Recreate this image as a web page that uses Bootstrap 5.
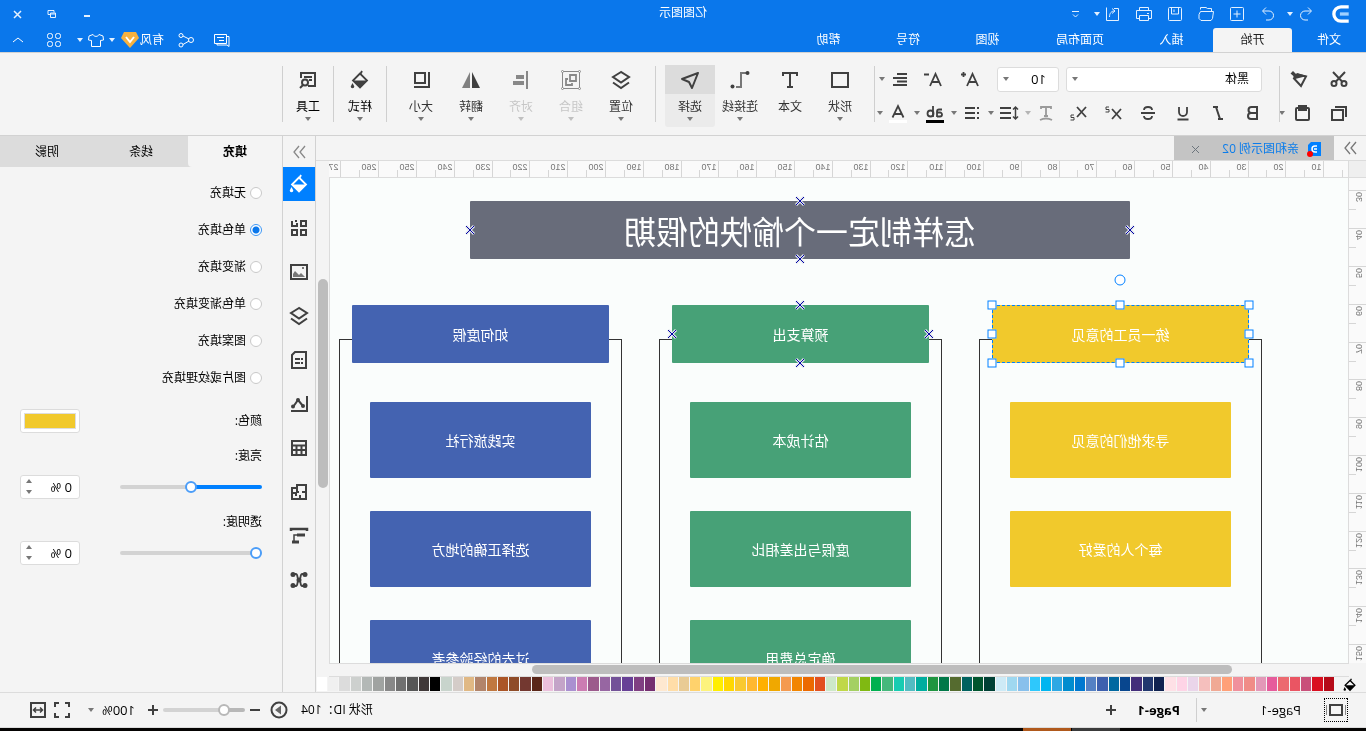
<!DOCTYPE html>
<html lang="zh-CN">
<head>
<meta charset="utf-8">
<meta name="viewport" content="width=device-width, initial-scale=1">
<title>亿图图示</title>
<link href="https://cdn.jsdelivr.net/npm/bootstrap@5.3.0/dist/css/bootstrap.min.css" rel="stylesheet">
<style>
:root{--brand:#0a77eb;--chrome:#f4f4f4;--line:#dcdcdc;--ink:#404040;--accent:#0080ff}
body{font-family:"Open Sans","Noto Sans CJK SC",sans-serif;font-size:12px;line-height:16px;color:#000;background:var(--chrome);overflow:hidden}
/* the whole window is shown flipped left to right */
.mirror{transform:scaleX(-1);height:100vh}
button{border:0;background:none;padding:0;color:inherit;font:inherit;line-height:16px}
svg{display:block;flex:none}
.ico{width:20px;height:20px;fill:none;stroke:currentColor;stroke-width:2}
.thin .ico{stroke-width:1}
.tri{width:6px;height:4px;fill:#777}
.ibtn{display:flex;align-items:center;justify-content:center;flex:none}
.titlebar{height:28px;flex:none;background:var(--brand);color:#e4f1ff}
.titlebar .ibtn{width:31px;height:26px}
.titlebar .drop{width:13px;margin-left:-6px}
.titlebar .tri,.menubar .tri{fill:#e4f1ff}
.titlebar .logo{width:34px;margin:0 2px 0 8px}
.titlebar .win{width:35px}
.app-title{left:0;right:0;top:5px;pointer-events:none;color:#fff}
.menubar{height:24px;flex:none;background:var(--brand);color:#fff}
.menubar .tab{height:24px}
.menubar .tab.on{background:var(--chrome);color:#222;width:79px;border-radius:3px 3px 0 0;margin-right:12px}
.menubar .file{width:74px}
.menubar .w1{width:59px}.menubar .w2{width:124px}.menubar .w3{width:61px}.menubar .w4{width:98px}
.menubar .ibtn{height:24px;width:36px}
.menubar .slim{width:16px}
.ribbon{height:84px;flex:none;border-top:1px solid #d2d2d2;border-bottom:1px solid #d2d2d2;color:var(--ink);padding-top:13px}
.rgroup{height:56px}
.rule{width:1px;height:56px;background:#cfcfcf;flex:none}
.gap-l{margin-left:9px}
.gap-r{margin-right:9px}
.ribbon .row-t{height:26px}
.ribbon .row-b{height:26px;margin-top:8px}
.clip{width:86px;padding-left:9px}
.clip .ibtn{width:36px;height:26px}
.fmt{width:404px;padding-left:8px}
.fmt .ibtn{width:35px;height:26px}
.fmt .wide{width:37px}
.fmt .unit .ibtn{width:29px}
.fmt .unit .tri{width:8px}
.faded{opacity:.5}
.pick{position:relative;height:25px}
.pick select{appearance:none;width:100%;height:25px;border:1px solid var(--line);border-radius:3px;background:#fff;color:#000;padding:0 12px;font-size:12px}
.pick .tri{position:absolute;right:6px;top:10px}
.pick.face{width:196px;margin-left:9px}
.pick.size{width:62px;margin:0 8px 0 7px}
.pick.size select{font-size:13px}
.tool{width:50px;height:62px;border-radius:3px;display:flex;flex-direction:column;align-items:center;color:#333;margin-top:-1px}
.tool.wider{width:52px}
.tool .pic{height:29px;width:100%;display:flex;align-items:center;justify-content:center;color:var(--ink)}
.tool .cap{margin-top:5px}
.tool .tri{margin-top:2px}
.tool.on{background:#ebebeb}.tool.on .pic{background:#dcdcdc}
.tool:disabled{color:#c6c6c6}.tool:disabled .pic{color:#888}.tool:disabled .tri{fill:#c0c0c0}
.flow-box{min-width:0;min-height:0}
.docbar{height:25px;flex:none;border-bottom:1px solid var(--line)}
.docbar .fold{width:32px;height:24px;color:#777}
.doctab{width:160px;height:24px;background:#c4c4c4;color:#0a7ceb;padding:2px 17px 0 12px}
.doctab .ico{width:15px;height:16px}
.ruler text{font:9px "Liberation Sans",sans-serif;fill:#777}
.ruler path{stroke:#d6d6d6;fill:none}
.ruler.h{height:17px;background:#fafafa}
.ruler.v{width:18px;background:#fafafa;border-right:1px solid var(--line)}
.rulerrow{height:17px;flex:none;border-bottom:1px solid var(--line)}
.corner{width:18px;background:#efefef;border-right:1px solid var(--line)}
.canvas{background:#fafdfc;overflow:hidden;border-right:1px solid var(--line)}
.node{display:flex;align-items:center;justify-content:center;color:#fff;font-size:14px;border-radius:1px;position:relative;font-family:"Noto Sans CJK SC",sans-serif}
.headline{width:660px;height:58px;margin:23px 0 46px 218px;background:#686c7a;font-size:32px}
.lanes{margin-left:86px;gap:37px}
.lane{width:283px;position:relative;height:480px;flex:none}
.lane::before{content:"";position:absolute;inset:34px 0 0 0;border:1px solid #333}
.lane .head{width:257px;height:58px;margin:0 auto 39px}
.lane .item{width:221px;height:76px;margin:0 auto 33px}
.ye .node{background:#f1c92c}.gr .node{background:#47a177}.bl .node{background:#4463b1}
.picked{outline:1px dashed var(--accent);outline-offset:-1px}
.grip{position:absolute;width:9px;height:9px;background:#fff;border:1px solid var(--accent);transform:translate(-50%,-50%)}
.turn{width:11px;height:11px;border-radius:50%}
.joint{position:absolute;width:11px;height:11px;transform:translate(-50%,-50%)}
.l0{left:0}.l5{left:50%}.l9{left:100%}.t0{top:0}.t5{top:50%}.t9{top:100%}.tt{top:-25px}
.vbar{width:13px;flex:none;background:var(--chrome)}
.vbar i{display:block;width:10px;height:209px;margin:118px 0 0 1px;background:#bdbdbd;border-radius:5px}
.hbar{height:14px;flex:none;border:1px solid var(--line);border-width:1px 0;margin-left:17px}
.hbar i{display:block;width:700px;height:9px;margin:1px 0 0 117px;background:#bdbdbd;border-radius:5px}
.palette{height:15px;flex:none}
.palette .bucket{width:32px;height:15px}
.palette .bucket .ico{width:14px;height:14px}
.palette .chip{flex:1 1 0;height:14px;margin-right:1px}
.dock{width:34px;border-left:1px solid #d2d2d2;border-right:1px solid #d2d2d2;color:var(--ink)}
.dock .ibtn{width:100%;height:34px;margin-bottom:10px}
.dock .fold{height:31px;margin:0;color:#888}
.dock .on{background:var(--accent);color:#fff}
.panel{width:282px}
.ptabs{height:31px;background:#dcdcdc}
.ptabs button{flex:1}
.ptabs .on{background:var(--chrome);border-radius:0 0 4px 0}
.panel .form-check{min-height:0;height:37px;margin:0;padding:0;display:flex;align-items:center;gap:4px}
.panel .form-check-input{float:none;margin:0;width:12px;height:12px;border:1px solid #c8c8c8;box-shadow:none}
.panel .form-check-input:checked{background:radial-gradient(circle,#0a77eb 0 3px,#fff 4px);border-color:#3d97f5}
.opts{padding:7px 20px 7px}
.field{padding:0 20px;height:35px;display:flex;align-items:center;justify-content:space-between}
.fieldslot{height:27px;margin-bottom:4px}
.swatch{width:60px;height:24px;border:1px solid var(--line);border-radius:3px;background:#fff;padding:3px}
.swatch span{display:block;height:16px;background:#f1c92c;border:1px solid #ddd}
.spin{position:relative;width:60px;height:24px}
.spin input{width:60px;height:24px;border:1px solid var(--line);border-radius:3px;background:#fff;padding:0 7px;font-size:13px}
.spin .arrows{position:absolute;right:6px;top:4px;display:flex;flex-direction:column;justify-content:space-between;height:15px}
.flip{transform:rotate(180deg)}
input[type=range]{appearance:none;width:142px;height:12px;background:none;margin:0}
input[type=range]::-webkit-slider-runnable-track{height:4px;border-radius:2px;background:linear-gradient(90deg,var(--fill,#0080ff) var(--at),#d3d3d3 var(--at))}
input[type=range]::-webkit-slider-thumb{appearance:none;width:12px;height:12px;margin-top:-4px;border-radius:50%;background:#fff;border:2px solid #4b9df8}
.zoomer input[type=range]{width:82px;--fill:#b8b8b8}
.zoomer input[type=range]::-webkit-slider-thumb{border-color:#b8b8b8}
.status{height:36px;flex:none;border-top:1px solid var(--line);border-bottom:1px solid var(--line);color:#000}
.status .pagebox{width:24px;height:24px;border:1px dotted #000;margin:0 23px 0 18px}
.status .ico{color:var(--ink)}
.status .rule{height:24px}
.latin{font-size:13px}
.pg{width:94px;text-align:left}
.taskbar{height:3px;flex:none;background:#050302;padding-left:246px}
.taskbar i{width:48px;height:3px;background:#3a3a3a;margin-right:1px}
.taskbar .hot{background:#b0591c}
</style>
</head>
<body>
<svg width="0" height="0" class="position-absolute" aria-hidden="true"><defs>
<symbol id="tri" viewBox="0 0 6 4"><path d="M0 0h6L3 4z"/></symbol>
<symbol id="fold" viewBox="0 0 20 20"><path d="M4 4l5 6-5 6M10 4l5 6-5 6" stroke-width="1.300"/></symbol>
<symbol id="bucket" viewBox="0 0 20 20"><path d="M8 1l2 4M10 3.500l7 7L10 17.500 3 10.500z" stroke-width="1.800"/><path d="M3 10.500h14l-7 7zM17.500 13l1.800 3.500a1.800 1.800 0 01-3.600 0z" fill="currentColor" stroke="none"/></symbol>
<symbol id="layers" viewBox="0 0 20 20"><path d="M10 2l8 5-8 5.500L2 7zM2 12.500l8 5.500 8-5.500"/></symbol>
<symbol id="joint" viewBox="0 0 11 11"><path d="M1.500 1.500l8 8M9.500 1.500l-8 8" stroke="#dfe4ea" stroke-width="3"/><path d="M1.500 1.500l8 8M9.500 1.500l-8 8" stroke="#0000a8"/></symbol>
</defs></svg>

<div class="mirror d-flex flex-column">
<header class="titlebar thin d-flex align-items-center position-relative">
  <span class="logo ibtn"><svg width="22" height="22" viewBox="0 0 20 20" fill="none"><path d="M3 3.500h7a6.500 6.500 0 010 13H3" stroke="#fff" stroke-width="3"/><path d="M3 10h8" stroke="#9fd0ff" stroke-width="3"/></svg></span>
  <button class="ibtn" aria-label="撤销"><svg class="ico" viewBox="0 0 20 20"><path d="M8 3.500L4.500 7 8 10.500M5 7h6a4.500 4.500 0 010 9H8"/></svg></button>
  <button class="ibtn drop" aria-label="撤销列表"><svg class="tri"><use href="#tri"/></svg></button>
  <button class="ibtn" aria-label="重做"><svg class="ico" viewBox="0 0 20 20"><path d="M12 3.500L15.500 7 12 10.500M15 7H9a4.500 4.500 0 000 9h3"/></svg></button>
  <button class="ibtn" aria-label="新建"><svg class="ico" viewBox="0 0 20 20"><rect x="3.500" y="3.500" width="13" height="13" rx="1"/><path d="M10 6.500v7M6.500 10h7"/></svg></button>
  <button class="ibtn" aria-label="打开"><svg class="ico" viewBox="0 0 20 20"><path d="M4.500 7.500v-3h4l1.500-1h5.500v2M2.500 7.500h13l1.500 3v4l-2 2H5l-1.500-2z"/></svg></button>
  <button class="ibtn" aria-label="保存"><svg class="ico" viewBox="0 0 20 20"><rect x="3.500" y="3.500" width="13" height="13" rx="1"/><path d="M6.500 4v6h7V4M11 5.500v2.500"/></svg></button>
  <button class="ibtn" aria-label="打印"><svg class="ico" viewBox="0 0 20 20"><path d="M5.500 6.500v-3h9v3M5 14.500H2.500v-8h15v8H15M5.500 11.500h9v5h-9zM5 9.500h2"/></svg></button>
  <button class="ibtn" aria-label="导出"><svg class="ico" viewBox="0 0 20 20"><path d="M9 4.500H4.500v12h12v-13M8 7l3-2.500M8 7l3 2.500M8.500 7c3 0 5 2 5 6"/></svg></button>
  <button class="ibtn drop" aria-label="导出列表"><svg class="tri"><use href="#tri"/></svg></button>
  <button class="ibtn" aria-label="更多"><svg width="9" height="9" viewBox="0 0 9 9" fill="none" stroke="currentColor"><path d="M1 1.500h7M2 4.500l2.500 2.500L7 4.500"/></svg></button>
  <div class="app-title position-absolute text-center">亿图图示</div>
  <div class="ms-auto d-flex">
    <button class="ibtn win" aria-label="最小化"><svg width="10" height="10" viewBox="0 0 10 10"><path d="M2 6h6v2H2z" fill="currentColor"/></svg></button>
    <button class="ibtn win" aria-label="还原"><svg width="10" height="10" viewBox="0 0 10 10" fill="none" stroke="currentColor"><path d="M3 3.500v-2h6v4H7M1.500 4h5v4.500h-5zM1.500 5h5"/></svg></button>
    <button class="ibtn win" aria-label="关闭"><svg width="9" height="9" viewBox="0 0 9 9" stroke="currentColor" stroke-width="1.500"><path d="M1 1l7 7M8 1L1 8"/></svg></button>
  </div>
</header>

<nav class="menubar thin d-flex align-items-center">
  <button class="tab file">文件</button><button class="tab on">开始</button><button class="tab w1">插入</button><button class="tab w2">页面布局</button><button class="tab w3">视图</button><button class="tab w4">符号</button><button class="tab w3">帮助</button>
  <div class="ms-auto d-flex align-items-center">
    <button class="ibtn" aria-label="消息"><svg class="ico" viewBox="0 0 20 20"><path d="M5.500 4.500h12v9h-12zM5 6.500H3v10l2-1.500h10v-1M8 7.500h7M8 10.500h5"/></svg></button>
    <button class="ibtn me-1" aria-label="分享"><svg class="ico" viewBox="0 0 20 20"><circle cx="5" cy="10" r="2.500"/><circle cx="15" cy="5.500" r="2"/><circle cx="15" cy="15" r="2"/><path d="M7 9l6-3M7 11l6 3.500"/></svg></button>
    <button class="d-flex align-items-center">有风
      <svg width="20" height="18" viewBox="0 0 20 18"><path d="M4 1h12l3 6-9 10L1 7z" fill="#f6b13f"/><path d="M6 6l4 5 4-5" fill="none" stroke="#fff" stroke-width="2"/></svg></button>
    <button class="ibtn slim" aria-label="账户"><svg class="tri"><use href="#tri"/></svg></button>
    <button class="ibtn slim" aria-label="皮肤"><svg class="ico" viewBox="0 0 20 20"><path d="M7 4.500l-4 1.500-.5 4 3 .5v6h9v-6l3-.5-.5-4-4-1.500c-1 2.500-5 2.500-6 0z"/></svg></button>
    <button class="ibtn slim" aria-label="皮肤列表"><svg class="tri"><use href="#tri"/></svg></button>
    <button class="ibtn" aria-label="应用"><svg class="ico" viewBox="0 0 20 20"><rect x="3.500" y="3.500" width="5" height="5" rx="2"/><rect x="11.500" y="3.500" width="5" height="5" rx="2"/><rect x="3.500" y="11.500" width="5" height="5" rx="2"/><rect x="11.500" y="11.500" width="5" height="5" rx="2"/></svg></button>
    <button class="ibtn" aria-label="收起"><svg class="ico" viewBox="0 0 20 20"><path d="M5 12l5-4 5 4"/></svg></button>
  </div>
</nav>

<section class="ribbon d-flex align-items-start">
  <div class="clip rgroup">
    <div class="row-t d-flex"><button class="ibtn" aria-label="剪切"><svg class="ico" viewBox="0 0 20 20"><circle cx="5" cy="14.500" r="2.500"/><circle cx="15" cy="14.500" r="2.500"/><path d="M4 3l9.500 10M16 3L6.500 13"/></svg></button>
    <button class="ibtn ms-1" aria-label="格式刷"><svg class="ico" viewBox="0 0 20 20"><path d="M3 7.500l8-2 4 4-7 7.500z"/><path d="M2 7l10-3 4 4-2 2zM12 6l4-4 2.500 2.500-4 3.500z" fill="currentColor" stroke="none"/></svg></button></div>
    <div class="row-b d-flex align-items-center"><button class="ibtn" aria-label="复制"><svg class="ico" viewBox="0 0 20 20"><path d="M6 7h11v10H6zM3 14V4h11"/></svg></button>
    <button class="ibtn" aria-label="粘贴"><svg class="ico" viewBox="0 0 20 20"><rect x="4" y="5" width="13" height="12" rx="1"/><path d="M7 3h7v4H7z"/></svg></button><svg class="tri"><use href="#tri"/></svg></div>
  </div>
  <div class="rule"></div>
  <div class="fmt rgroup">
    <div class="row-t d-flex align-items-center">
      <div class="pick face"><select aria-label="字体"><option>黑体</option></select><svg class="tri"><use href="#tri"/></svg></div>
      <div class="pick size"><select aria-label="字号"><option>10</option></select><svg class="tri"><use href="#tri"/></svg></div>
      <button class="ibtn wide" aria-label="增大字号"><svg class="ico" viewBox="0 0 20 20"><path d="M2 17L7.500 5 13 17M4 13h7M14 5.500h5M16.500 3v5" stroke-width="1.800"/></svg></button>
      <button class="ibtn wide" aria-label="减小字号"><svg class="ico" viewBox="0 0 20 20"><path d="M2 17L7.500 5 13 17M4 13h7M14 5.500h5" stroke-width="1.800"/></svg></button>
      <span class="unit d-flex align-items-center"><button class="ibtn" aria-label="对齐文本"><svg class="ico" viewBox="0 0 20 20"><path d="M3 5h10M3 9h14M3 12.500h10M3 16h14"/></svg></button><svg class="tri"><use href="#tri"/></svg></span>
    </div>
    <div class="row-b d-flex align-items-center">
      <button class="ibtn" aria-label="加粗"><svg class="ico" viewBox="0 0 20 20"><path d="M6 4h5.500a3 3 0 010 6H6zM6 10h6a3 3 0 010 6H6z"/></svg></button>
      <button class="ibtn" aria-label="斜体"><svg class="ico" viewBox="0 0 20 20"><path d="M10 4h5M5 16h5M12 4L8 16"/></svg></button>
      <button class="ibtn" aria-label="下划线"><svg class="ico" viewBox="0 0 20 20"><path d="M6 4v5a4 4 0 008 0V4M4.500 16.500h11" stroke-width="1.800"/></svg></button>
      <button class="ibtn" aria-label="删除线"><svg class="ico" viewBox="0 0 20 20"><path d="M14 7c0-4-8-4-8 0M6 13c0 4 8 4 8 0M3 10h14" stroke-width="1.800"/></svg></button>
      <button class="ibtn" aria-label="上标"><svg class="ico" viewBox="0 0 20 20"><path d="M2 6l9 10M11 6L2 16" stroke-width="1.800"/><path d="M14 4h3v2.500h-3V9h3.500" stroke-width="1"/></svg></button>
      <button class="ibtn" aria-label="下标"><svg class="ico" viewBox="0 0 20 20"><path d="M2 4l9 10M11 4L2 14" stroke-width="1.800"/><path d="M14 12h3v2.500h-3V17h3.500" stroke-width="1"/></svg></button>
      <span class="unit faded d-flex align-items-center"><button class="ibtn" aria-label="文字效果"><svg class="ico" viewBox="0 0 20 20"><path d="M5 6V4h10v2M10 4v9M8 13h4M4 17q6-3 12 0" stroke-width="1.800"/></svg></button><svg class="tri"><use href="#tri"/></svg></span>
      <span class="unit d-flex align-items-center"><button class="ibtn" aria-label="行距"><svg class="ico" viewBox="0 0 20 20"><path d="M8 5h11M8 10h11M8 15h11"/><path d="M3.500 4v12M1 6.500L3.500 4 6 6.500M1 13.500L3.500 16 6 13.500" stroke-width="1.500"/></svg></button><svg class="tri"><use href="#tri"/></svg></span>
      <span class="unit d-flex align-items-center"><button class="ibtn" aria-label="项目符号"><svg class="ico" viewBox="0 0 20 20"><path d="M7 5h10M7 10h10M7 15h10M3 5h2M3 10h2M3 15h2"/></svg></button><svg class="tri"><use href="#tri"/></svg></span>
      <span class="unit d-flex align-items-center"><button class="ibtn" aria-label="文本高亮"><svg class="ico" viewBox="0 0 20 20"><path d="M3 6.500h3a2 2 0 012 2V14M8 9.500H5a2 2 0 000 4h3M12 3v11" stroke-width="1.800"/><circle cx="14.500" cy="10.500" r="3" stroke-width="1.800"/><path d="M1 18.500h18" stroke="#000" stroke-width="3"/></svg></button><svg class="tri"><use href="#tri"/></svg></span>
      <span class="unit d-flex align-items-center"><button class="ibtn" aria-label="字体颜色"><svg class="ico" viewBox="0 0 20 20"><path d="M4.500 14.500L10 3l5.500 11.500M6.500 11h7" stroke-width="1.800"/><path d="M1 18.500h18" stroke="#fff" stroke-width="3"/></svg></button><svg class="tri"><use href="#tri"/></svg></span>
    </div>
  </div>
  <div class="rule gap-r"></div>
  <button class="tool"><span class="pic"><svg class="ico" viewBox="0 0 20 20"><path d="M2 3h16v14H2z"/></svg></span><span class="cap">形状</span><svg class="tri"><use href="#tri"/></svg></button>
  <button class="tool"><span class="pic"><svg class="ico" viewBox="0 0 20 20"><path d="M3 6V3h14v3M10 3v14M7 17h6"/></svg></span><span class="cap">文本</span></button>
  <button class="tool"><span class="pic"><svg class="ico" viewBox="0 0 20 20"><path d="M4 3h5v14h5" stroke="#777"/><g fill="currentColor" stroke="none"><circle cx="2.500" cy="3" r="2"/><circle cx="17.500" cy="16.500" r="2"/></g></svg></span><span class="cap">连接线</span><svg class="tri"><use href="#tri"/></svg></button>
  <button class="tool on"><span class="pic"><svg class="ico" viewBox="0 0 20 20"><path d="M2 3l16 6-7 3-3 6z" stroke-linejoin="round"/></svg></span><span class="cap">选择</span><svg class="tri"><use href="#tri"/></svg></button>
  <div class="rule gap-l gap-r"></div>
  <button class="tool"><span class="pic"><svg class="ico" viewBox="0 0 20 20"><use href="#layers"/></svg></span><span class="cap">位置</span><svg class="tri"><use href="#tri"/></svg></button>
  <button class="tool" disabled><span class="pic"><svg class="ico" viewBox="0 0 20 20"><path d="M1.500 1.500h17v17h-17z" stroke-width="1"/><g fill="#fff" stroke-width="1"><circle cx="1.500" cy="1.500" r="1"/><circle cx="18.500" cy="1.500" r="1"/><circle cx="1.500" cy="18.500" r="1"/><circle cx="18.500" cy="18.500" r="1"/></g><path d="M5 5h6v6H5zM13 9h2v6H9v-2" stroke-width="1.800"/></svg></span><span class="cap">组合</span><svg class="tri"><use href="#tri"/></svg></button>
  <button class="tool" disabled><span class="pic"><svg class="ico" viewBox="0 0 20 20"><path d="M4 1v18"/><path d="M7 7h8M7 13h11" stroke-width="4"/></svg></span><span class="cap">对齐</span><svg class="tri"><use href="#tri"/></svg></button>
  <button class="tool"><span class="pic"><svg class="ico" viewBox="0 0 20 20"><path d="M9 2v16H1z" fill="#404040" stroke="none"/><path d="M11 2v16h8z" fill="#808080" stroke="none"/></svg></span><span class="cap">翻转</span><svg class="tri"><use href="#tri"/></svg></button>
  <button class="tool"><span class="pic"><svg class="ico" viewBox="0 0 20 20"><path d="M6 3h10v10H6zM2 2v15h15"/></svg></span><span class="cap">大小</span><svg class="tri"><use href="#tri"/></svg></button>
  <div class="rule gap-l"></div>
  <button class="tool wider text-black"><span class="pic"><svg class="ico" viewBox="0 0 20 20"><use href="#bucket"/></svg></span><span class="cap">样式</span><svg class="tri"><use href="#tri"/></svg></button>
  <div class="rule"></div>
  <button class="tool text-black"><span class="pic"><svg class="ico" viewBox="0 0 20 20"><path d="M10 16H3V3h14v5M6 7h8M6 10h3"/><circle cx="13" cy="12.500" r="3"/><path d="M15 15l3 3"/></svg></span><span class="cap">工具</span><svg class="tri"><use href="#tri"/></svg></button>
  <div class="rule"></div>
</section>

<main class="flow-box d-flex flex-grow-1">
  <div class="flow-box d-flex flex-column flex-grow-1">
    <div class="docbar d-flex">
      <button class="ibtn fold" aria-label="展开符号库"><svg class="ico" viewBox="0 0 20 20"><use href="#fold"/></svg></button>
      <div class="doctab d-flex align-items-center"><svg class="ico" viewBox="0 0 15 16"><path d="M1 1h10l3 3v11H1z" fill="#0080ff" stroke="none"/><path d="M5 5h2a3 3 0 010 6H5M5 8h3" stroke="#fff" stroke-width="1.500"/><circle cx="12" cy="13" r="3" fill="red" stroke="none"/></svg>
        <span class="ms-2">亲和图示例 02</span>
        <button class="ms-auto text-secondary" aria-label="关闭文档"><svg width="9" height="9" viewBox="0 0 9 9" stroke="currentColor"><path d="M1 1l7 7M8 1L1 8"/></svg></button></div>
    </div>
    <div class="flow-box d-flex flex-grow-1">
      <div class="flow-box d-flex flex-column flex-grow-1">
        <div class="rulerrow d-flex"><div class="corner flex-shrink-0"></div><div class="flex-grow-1 overflow-hidden"><svg class="ruler h w-100" id="rh"></svg></div></div>
        <div class="flow-box d-flex flex-grow-1">
          <div class="ruler v flex-shrink-0 overflow-hidden"><svg class="w-100 h-100" id="rv"></svg></div>
          <div class="canvas flex-grow-1">
            <div class="node headline">怎样制定一个愉快的假期
              <svg class="joint l5 t0"><use href="#joint"/></svg><svg class="joint l5 t9"><use href="#joint"/></svg><svg class="joint l0 t5"><use href="#joint"/></svg><svg class="joint l9 t5"><use href="#joint"/></svg></div>
            <div class="lanes d-flex">
              <div class="lane ye"><div class="node head picked">统一员工的意见
                <i class="grip l0 t0"></i><i class="grip l5 t0"></i><i class="grip l9 t0"></i><i class="grip l0 t5"></i><i class="grip l9 t5"></i><i class="grip l0 t9"></i><i class="grip l5 t9"></i><i class="grip l9 t9"></i><i class="grip turn l5 tt"></i></div>
                <div class="node item">寻求他们的意见</div><div class="node item">每个人的爱好</div></div>
              <div class="lane gr"><div class="node head">预算支出
                <svg class="joint l5 t0"><use href="#joint"/></svg><svg class="joint l5 t9"><use href="#joint"/></svg><svg class="joint l0 t5"><use href="#joint"/></svg><svg class="joint l9 t5"><use href="#joint"/></svg></div>
                <div class="node item">估计成本</div><div class="node item">度假与出差相比</div><div class="node item">确定总费用</div></div>
              <div class="lane bl"><div class="node head">如何度假</div>
                <div class="node item">实践旅行社</div><div class="node item">选择正确的地方</div><div class="node item">过去的经验参考</div></div>
            </div>
          </div>
        </div>
        <div class="hbar"><i></i></div>
      </div>
      <div class="vbar"><i></i></div>
    </div>
    <div class="palette d-flex" id="palette"><button class="bucket ibtn" aria-label="填充颜色"><svg class="ico" viewBox="0 0 20 20"><use href="#bucket"/></svg></button></div>
  </div>

  <nav class="dock flex-shrink-0">
    <button class="ibtn fold" aria-label="收起面板"><svg class="ico" viewBox="0 0 20 20"><use href="#fold"/></svg></button>
    <button class="ibtn on" aria-label="填充"><svg class="ico" viewBox="0 0 20 20"><use href="#bucket"/></svg></button>
    <button class="ibtn" aria-label="符号"><svg class="ico" viewBox="0 0 20 20"><path d="M3 3h5v5H3zM12 3h2M17 3v5h-5V5M3 12h5v5H3zM12 12h5v5h-5z"/></svg></button>
    <button class="ibtn" aria-label="图片"><svg class="ico" viewBox="0 0 20 20"><path d="M2 3h16v14H2z"/><path d="M4 15l4-4 2 2 4-4 2 3v3z" fill="#777" stroke="none"/><path d="M5 6h2" stroke="#777"/></svg></button>
    <button class="ibtn" aria-label="图层"><svg class="ico" viewBox="0 0 20 20"><use href="#layers"/></svg></button>
    <button class="ibtn" aria-label="页面"><svg class="ico" viewBox="0 0 20 20"><path d="M3 2h11l3 3v13H3z"/><path d="M6 9h2M9 9h5M6 13h2M9 13h5"/></svg></button>
    <button class="ibtn" aria-label="图表"><svg class="ico" viewBox="0 0 20 20"><path d="M2 2v15h16M6 12l5-6 5 7"/><g fill="currentColor" stroke="none"><circle cx="6" cy="12" r="2"/><circle cx="11" cy="6" r="2"/><circle cx="16" cy="12.500" r="2"/></g></svg></button>
    <button class="ibtn" aria-label="表格"><svg class="ico" viewBox="0 0 20 20"><path d="M3 3h14v14H3zM3 7.500h14M3 12h14M7.500 8v9M12.500 8v9"/></svg></button>
    <button class="ibtn" aria-label="平面图"><svg class="ico" viewBox="0 0 20 20"><path d="M3 3h9v3h5v11H3zM12 6v4h-2M3 10h4M9 17v-4M17 11h-4v3"/></svg></button>
    <button class="ibtn" aria-label="甘特图"><svg class="ico" viewBox="0 0 20 20"><path d="M2 5V3h16v2" stroke-width="2.500"/><path d="M4 9h8M10 16h7" stroke-width="3"/><path d="M12 9h3v6" stroke-width="1.500"/></svg></button>
    <button class="ibtn" aria-label="思维导图"><svg class="ico" viewBox="0 0 20 20"><path d="M4 4h3c2 0 1 6 3 6s1-6 3-6h3M4 16h3c2 0 1-6 3-6s1 6 3 6h3" stroke-width="1.800"/><g fill="currentColor" stroke="none"><circle cx="4" cy="4.500" r="2.500"/><circle cx="16" cy="4.500" r="2.500"/><circle cx="4" cy="15.500" r="2.500"/><circle cx="16" cy="15.500" r="2.500"/><circle cx="10" cy="10" r="2.500"/></g></svg></button>
  </nav>

  <aside class="panel flex-shrink-0">
    <div class="ptabs d-flex"><button class="on fw-bold">填充</button><button>线条</button><button>阴影</button></div>
    <div class="opts">
      <div class="form-check"><input class="form-check-input" type="radio" name="f" id="f1"><label for="f1">无填充</label></div>
      <div class="form-check"><input class="form-check-input" type="radio" name="f" id="f2" checked><label for="f2">单色填充</label></div>
      <div class="form-check"><input class="form-check-input" type="radio" name="f" id="f3"><label for="f3">渐变填充</label></div>
      <div class="form-check"><input class="form-check-input" type="radio" name="f" id="f4"><label for="f4">单色渐变填充</label></div>
      <div class="form-check"><input class="form-check-input" type="radio" name="f" id="f5"><label for="f5">图案填充</label></div>
      <div class="form-check"><input class="form-check-input" type="radio" name="f" id="f6"><label for="f6">图片或纹理填充</label></div>
    </div>
    <div class="field"><span>颜色:</span><button class="swatch" aria-label="颜色"><span></span></button></div>
    <div class="field"><label for="s1">亮度:</label></div>
    <div class="field fieldslot"><input type="range" id="s1" value="50" style="--at:50%"><div class="spin"><input type="text" value="0 %" aria-label="亮度值"><div class="arrows"><svg class="tri flip"><use href="#tri"/></svg><svg class="tri"><use href="#tri"/></svg></div></div></div>
    <div class="field"><label for="s2">透明度:</label></div>
    <div class="field fieldslot"><input type="range" id="s2" value="0" style="--at:0%"><div class="spin"><input type="text" value="0 %" aria-label="透明度值"><div class="arrows"><svg class="tri flip"><use href="#tri"/></svg><svg class="tri"><use href="#tri"/></svg></div></div></div>
  </aside>
</main>

<footer class="status d-flex align-items-center">
  <button class="pagebox ibtn" aria-label="页面视图"><svg class="ico" viewBox="0 0 20 20"><path d="M4 5h12v10H4z"/><path d="M0 5v10M20 5v10" stroke="#888"/></svg></button>
  <button class="pg latin">Page-1</button><svg class="tri"><use href="#tri"/></svg><div class="rule ms-1"></div>
  <button class="fw-bold latin ms-3">Page-1</button>
  <button class="ms-3" aria-label="新建页面"><svg class="ico" viewBox="0 0 20 20"><path d="M10 5v10M5 10h10"/></svg></button>
  <div class="zoomer ms-auto d-flex align-items-center">
    <span class="me-2">形状 ID：104</span>
    <button class="ms-1 me-1" aria-label="播放"><svg class="ico" viewBox="0 0 20 20"><circle cx="10" cy="10" r="7.500"/><path d="M8 5.500v9l6-4.500z" fill="#666" stroke="none"/></svg></button>
    <button aria-label="缩小"><svg class="ico" viewBox="0 0 20 20"><path d="M5 10h10"/></svg></button>
    <input type="range" value="21" style="--at:27%" aria-label="缩放">
    <button aria-label="放大"><svg class="ico" viewBox="0 0 20 20"><path d="M10 5v10M5 10h10"/></svg></button>
    <span class="latin ms-2 me-2">100%</span><svg class="tri"><use href="#tri"/></svg>
    <button class="ms-3" aria-label="全屏"><svg class="ico" viewBox="0 0 20 20"><path d="M3 7V3h4M13 3h4v4M17 13v4h-4M7 17H3v-4"/></svg></button>
    <button class="ms-1 pe-4 me-1" aria-label="适应宽度"><svg class="ico" viewBox="0 0 20 20"><path d="M3 3h14v14H3z"/><path d="M6 10h8M8 7.500L5.500 10 8 12.500M12 7.500l2.500 2.500-2.500 2.500" stroke-width="1.500"/></svg></button>
  </div>
</footer>
<div class="taskbar d-flex"><i></i><i class="hot"></i></div>
</div>

<script>
// rulers: 3.78 px per millimetre, a long tick every 10 and a short one every 5
function ruler(id, origin, first, last, vertical){
  let ticks = '', labels = '';
  for(let v = first; v <= last; v += 5){
    const p = Math.round(origin + v * 3.78) + .5, big = v % 10 === 0;
    ticks += vertical ? `M${big ? 0 : 10} ${p}H18` : `M${p} ${big ? 0 : 9}V17`;
    if(big && v) labels += vertical
      ? `<text transform="translate(10 ${p + 1.5}) rotate(-90)" text-anchor="end">${v}</text>`
      : `<text x="${p + 2}" y="9">${v}</text>`;
  }
  document.getElementById(id).innerHTML = `<path d="${ticks}"/>` + labels;
}
ruler('rh', -14, 5, 275, false);
ruler('rv', -101, 30, 155, true);
const colors = ('b50a18 d90f20 c9507a ea5563 ec6a70 e65c9c e398b8 f08c87 f0909c ffa078 f0a994 f5bfbd ead5ea fed4e6 fee0e6 102250 22376e 432e7a 08468e 0068a0 3d5fae 5581c4 0078d0 008ccf 2da8e4 00b5f0 2ec8fc 88c0ec 9fd8f0 cdeaf6 '+
 '004035 00552e 00625f 556b2f 007848 1f9540 00ad9f 52bcc2 18ccb2 45b87c 00b050 80b912 a4d063 c0d848 cde8c8 e25020 ec6900 f28500 f49a50 f0a800 ffb000 ffb830 f9c930 ffd700 ffee00 fdf37d ffd26c e9cb94 ffdda8 fee8d0 '+
 '752f70 804082 674096 735298 9766a2 9c5a8c cc7db2 aa90d0 c4a4c8 ebc0dc 5a2618 733830 8f4c28 ab5526 c07840 b2846a e0b884 d4ccc8 c8d4cc 000000 403838 565656 707070 888888 a0a3a1 b3b8b6 cdd0ce dcdcdc f0f0f0 ffffff').split(' ');
const bar = document.getElementById('palette');
colors.forEach(c => { const b = document.createElement('button'); b.className = 'chip'; b.style.background = '#' + c; b.setAttribute('aria-label', '#' + c); bar.append(b); });
</script>
</body>
</html>
